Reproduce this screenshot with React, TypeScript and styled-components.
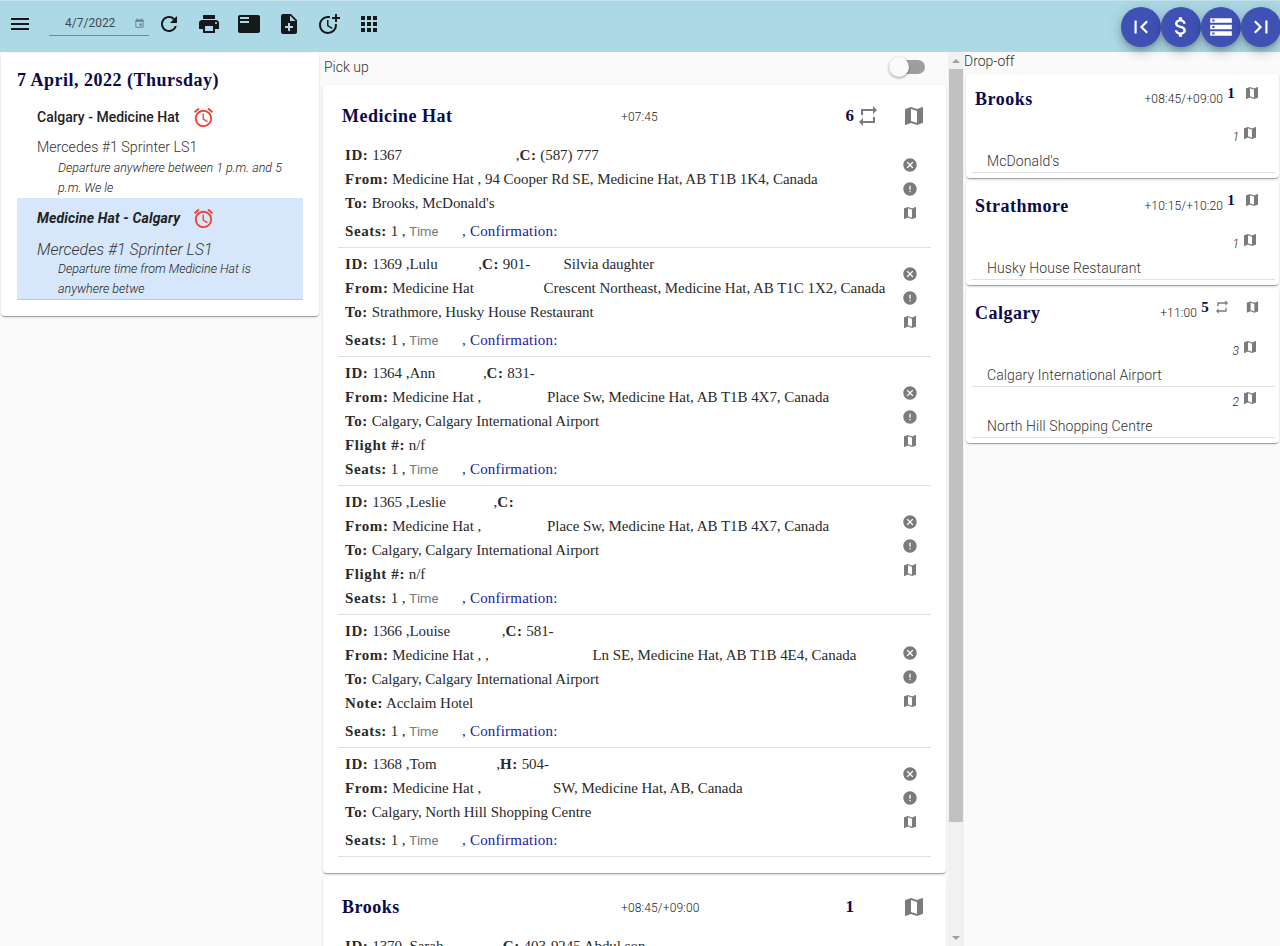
import React from 'react';
import styled, { createGlobalStyle } from 'styled-components';
import {
  MdMenu,
  MdRefresh,
  MdPrint,
  MdFeaturedPlayList,
  MdNoteAdd,
  MdMoreTime,
  MdApps,
  MdAccessAlarm,
  MdFirstPage,
  MdLastPage,
  MdAttachMoney,
  MdStorage,
  MdMap,
  MdRepeat,
  MdCancel,
  MdError,
  MdEvent,
} from 'react-icons/md';

const GlobalStyle = createGlobalStyle`
  html, body {
    margin: 0;
    padding: 0;
    height: 100%;
    overflow: hidden;
    background: #fafafa;
    font-family: Roboto, "Liberation Sans", sans-serif;
  }
  * { box-sizing: border-box; }
`;

const serif = `"Liberation Serif", "Times New Roman", serif`;

const Page = styled.div`
  height: 946px;
  display: flex;
  flex-direction: column;
  overflow: hidden;
`;

const AppBar = styled.header`
  height: 52px;
  flex: none;
  background: #add8e6;
  border-top: 1px solid #c4e3ec;
  display: flex;
  align-items: flex-start;
  position: relative;
  z-index: 2;
`;

const ToolIcons = styled.div`
  display: flex;
  align-items: center;
  height: 46px;
  flex: 1;
`;

const ToolButton = styled.span<{ $w?: number }>`
  width: ${(p) => p.$w ?? 40}px;
  height: 40px;
  display: flex;
  align-items: center;
  justify-content: center;
  color: #15191c;
  flex: none;
`;

const DateField = styled.div`
  width: 100px;
  height: 22px;
  margin: 1px 0 0 10px;
  border-bottom: 1px solid #6f8b95;
  display: flex;
  align-items: center;
  flex: none;
  font-size: 12px;
  color: #3c4a50;
  padding: 0 4px 2px 16px;
  justify-content: space-between;
  svg { color: #66808a; }
`;

const FabRow = styled.div`
  display: flex;
  padding: 6px 0 0;
  margin-right: -1px;
`;

const Fab = styled.span`
  width: 40px;
  height: 40px;
  border-radius: 50%;
  background: #3f51b5;
  color: #fff;
  display: flex;
  align-items: center;
  justify-content: center;
  box-shadow: 0 3px 5px -1px rgba(0, 0, 0, 0.2), 0 6px 10px 0 rgba(0, 0, 0, 0.14), 0 1px 18px 0 rgba(0, 0, 0, 0.12);
`;

const Columns = styled.div`
  flex: 1;
  min-height: 0;
  display: flex;
`;

const LeftColumn = styled.aside`
  width: 320px;
  flex: none;
  padding: 1px 1px 0;
`;

const Paper = styled.div`
  background: #fff;
  border-radius: 4px;
  box-shadow: 0 2px 1px -1px rgba(0, 0, 0, 0.2), 0 1px 1px 0 rgba(0, 0, 0, 0.14), 0 1px 3px 0 rgba(0, 0, 0, 0.12);
`;

const TripPaper = styled(Paper)`
  padding: 15px 16px 16px;
  height: 263px;
`;

const DayTitle = styled.h2`
  margin: 0 0 13px;
  font: bold 18px/24px ${serif};
  letter-spacing: 0.5px;
  color: #0a0a4b;
`;

const TripItem = styled.div<{ $selected?: boolean }>`
  padding: ${(p) => (p.$selected ? '8px' : '0')} 0 0 20px;
  height: ${(p) => (p.$selected ? 102 : 93)}px;
  background: ${(p) => (p.$selected ? '#d6e7fb' : 'transparent')};
  border-bottom: ${(p) => (p.$selected ? '1px solid #b8cde4' : 'none')};
  font-style: ${(p) => (p.$selected ? 'italic' : 'normal')};
`;

const TripHead = styled.div`
  display: flex;
  align-items: center;
  height: 24px;
  color: #212121;
  svg { color: #f44336; }
`;

const TripTitle = styled.span<{ $strong?: boolean }>`
  width: 155px;
  font-size: 14px;
  font-weight: ${(p) => (p.$strong ? 700 : 500)};
  letter-spacing: ${(p) => (p.$strong ? 0.15 : 0)}px;
`;

const Vehicle = styled.div<{ $large?: boolean }>`
  margin-top: ${(p) => (p.$large ? 10 : 8)}px;
  font-size: ${(p) => (p.$large ? 16 : 14.2)}px;
  line-height: ${(p) => (p.$large ? 19 : 21)}px;
  font-weight: 300;
  color: #333;
`;

const TripNote = styled.div`
  margin-left: 21px;
  font-size: 12.5px;
  line-height: 20px;
  font-weight: 300;
  font-style: italic;
  color: #222;
  max-width: 232px;
`;

const MiddleColumn = styled.main`
  width: 628px;
  flex: none;
  padding: 0 2px 0 3px;
  overflow: hidden;
`;

const SectionBar = styled.div`
  height: 33px;
  display: flex;
  align-items: center;
  justify-content: space-between;
  font-size: 14px;
  font-weight: 300;
  color: #333;
  padding: 0 21px 4px 1px;
`;

const Toggle = styled.span`
  width: 36px;
  height: 20px;
  position: relative;
  display: block;
  &::before {
    content: '';
    position: absolute;
    left: 2px;
    right: 0;
    top: 3px;
    height: 14px;
    border-radius: 7px;
    background: #9e9e9e;
  }
  &::after {
    content: '';
    position: absolute;
    left: 0;
    top: 0;
    width: 20px;
    height: 20px;
    border-radius: 50%;
    background: #fafafa;
    box-shadow: 0 1px 3px rgba(0, 0, 0, 0.4);
  }
`;

const StopCard = styled(Paper)`
  padding: 0 15px 16px;
  margin-bottom: 3px;
`;

const StopHeader = styled.div`
  height: 54px;
  display: grid;
  grid-template-columns: 279px 1fr auto;
  align-items: center;
  padding: 9px 4px 1px;
`;

const StopName = styled.h3`
  margin: 0;
  font: bold 18px/24px ${serif};
  letter-spacing: 0.5px;
  color: #0a0a4b;
`;

const StopTime = styled.span`
  font-size: 12px;
  font-weight: 300;
  letter-spacing: 0.15px;
  color: #222;
  padding-top: 2px;
`;

const StopTools = styled.div`
  display: flex;
  align-items: center;
  justify-content: flex-end;
  color: #7b7b7b;
  padding-right: 1px;
`;

const StopCount = styled.b`
  font: bold 17px/20px ${serif};
  color: #0a0a4b;
  margin-right: 2px;
`;

const ToolSlot = styled.span<{ $w: number }>`
  width: ${(p) => p.$w}px;
  display: flex;
  justify-content: flex-start;
  align-items: center;
`;

const Passenger = styled.div`
  display: flex;
  border-bottom: 1px solid #e0e0e0;
  padding: 4px 4px 4px 7px;
`;

const PassengerLines = styled.div`
  flex: 1;
  min-width: 0;
`;

const Line = styled.div<{ $gapTop?: boolean }>`
  font: 15px/24px ${serif};
  letter-spacing: -0.04px;
  color: #2a2a2a;
  white-space: nowrap;
  margin-top: ${(p) => (p.$gapTop ? 4 : 0)}px;
  b { font-weight: bold; letter-spacing: 0.6px; }
`;

const Gap = styled.span<{ $w: number }>`
  display: inline-block;
  width: ${(p) => p.$w}px;
`;

const TimeLabel = styled.span`
  font: 400 13px/1 Roboto, sans-serif;
  color: #777;
`;

const Confirmation = styled.span`
  color: #1a1aa0;
  letter-spacing: 0.2px;
`;

const PassengerIcons = styled.div`
  width: 24px;
  margin-right: 5px;
  flex: none;
  display: flex;
  flex-direction: column;
  justify-content: center;
  align-items: center;
  gap: 8px;
  color: #7b7b7b;
  padding-bottom: 8px;
`;

const Scrollbar = styled.div`
  width: 16px;
  flex: none;
  background: #f1f1f1;
  display: flex;
  flex-direction: column;
  align-items: center;
  justify-content: space-between;
  padding: 0 1px;
`;

const ScrollArrow = styled.span<{ $down?: boolean }>`
  height: 17px;
  flex: none;
  display: flex;
  align-items: center;
  &::before {
    content: '';
    border-left: 4px solid transparent;
    border-right: 4px solid transparent;
    border-${(p) => (p.$down ? 'top' : 'bottom')}: 4px solid #a0a0a0;
  }
`;

const ScrollThumb = styled.div`
  width: 100%;
  height: 753px;
  background: #c1c1c1;
  flex: none;
`;

const ScrollTrack = styled.div`
  flex: 1;
  width: 100%;
`;

const RightColumn = styled.section`
  flex: 1;
  min-width: 0;
  padding: 0 1px 0 0;
`;

const DropHeading = styled.div`
  height: 22px;
  display: flex;
  align-items: center;
  font-size: 14px;
  font-weight: 300;
  color: #333;
  padding-bottom: 4px;
`;

const DropCard = styled(Paper)`
  margin: 0 0 3px 2px;
  padding: 0 4px 5px 6px;
`;

const DropHeader = styled.div`
  height: 45px;
  display: flex;
  align-items: flex-start;
  padding: 13px 0 0 3px;
`;

const DropName = styled.h3`
  margin: 0;
  flex: 1;
  font: bold 18px/24px ${serif};
  letter-spacing: 0.5px;
  color: #0a0a4b;
`;

const DropTime = styled.span`
  font-size: 12px;
  font-weight: 300;
  letter-spacing: 0.15px;
  color: #222;
  line-height: 24px;
  margin-right: 2px;
`;

const DropCount = styled.b`
  font: bold 15px/14px ${serif};
  color: #0a0a4b;
  margin-top: -1px;
  width: 12px;
  text-align: center;
`;

const DropTool = styled.span<{ $w: number }>`
  width: ${(p) => p.$w}px;
  margin-top: -2px;
  color: #7b7b7b;
  display: flex;
  justify-content: flex-end;
  padding-right: 15px;
`;

const DropStop = styled.div`
  border-bottom: 1px solid #e0e0e0;
  padding-top: 5px;
`;

const DropStopTop = styled.div<{ $first?: boolean }>`
  height: 22px;
  margin-top: ${(p) => (p.$first ? -2 : -5)}px;
  display: flex;
  align-items: center;
  justify-content: flex-end;
  color: #7b7b7b;
  padding-right: 17px;
  gap: 3px;
`;

const DropSeats = styled.i`
  font-size: 12px;
  font-weight: 300;
  color: #222;
  padding-top: 7px;
`;

const DropPlace = styled.div`
  font-size: 14px;
  font-weight: 300;
  letter-spacing: 0.1px;
  line-height: 20px;
  color: #333;
  padding: 7px 0 1px 15px;
`;

type Rider = {
  id: React.ReactNode;
  from: React.ReactNode;
  to: string;
  extra?: { label: string; value: string; gapBelow: boolean };
};

const riders: Rider[] = [
  {
    id: <>1367 <Gap $w={110} />,<b>C:</b> (587) 777</>,
    from: <>Medicine Hat , 94 Cooper Rd SE, Medicine Hat, AB T1B 1K4, Canada</>,
    to: "Brooks, McDonald's",
  },
  {
    id: <>1369 ,Lulu <Gap $w={37} />,<b>C:</b> 901- <Gap $w={26} /> Silvia daughter</>,
    from: <>Medicine Hat <Gap $w={66} />Crescent Northeast, Medicine Hat, AB T1C 1X2, Canada</>,
    to: 'Strathmore, Husky House Restaurant',
  },
  {
    id: <>1364 ,Ann <Gap $w={44} />,<b>C:</b> 831-</>,
    from: <>Medicine Hat , <Gap $w={62} />Place Sw, Medicine Hat, AB T1B 4X7, Canada</>,
    to: 'Calgary, Calgary International Airport',
    extra: { label: 'Flight #:', value: 'n/f', gapBelow: false },
  },
  {
    id: <>1365 ,Leslie <Gap $w={44} />,<b>C:</b></>,
    from: <>Medicine Hat , <Gap $w={62} />Place Sw, Medicine Hat, AB T1B 4X7, Canada</>,
    to: 'Calgary, Calgary International Airport',
    extra: { label: 'Flight #:', value: 'n/f', gapBelow: false },
  },
  {
    id: <>1366 ,Louise <Gap $w={48} />,<b>C:</b> 581-</>,
    from: <>Medicine Hat , , <Gap $w={100} />Ln SE, Medicine Hat, AB T1B 4E4, Canada</>,
    to: 'Calgary, Calgary International Airport',
    extra: { label: 'Note:', value: 'Acclaim Hotel', gapBelow: true },
  },
  {
    id: <>1368 ,Tom <Gap $w={56} />,<b>H:</b> 504-</>,
    from: <>Medicine Hat , <Gap $w={68} />SW, Medicine Hat, AB, Canada</>,
    to: 'Calgary, North Hill Shopping Centre',
  },
];

const PassengerRow = ({ rider }: { rider: Rider }) => (
  <Passenger>
    <PassengerLines>
      <Line><b>ID:</b> {rider.id}</Line>
      <Line><b>From:</b> {rider.from}</Line>
      <Line><b>To:</b> {rider.to}</Line>
      {rider.extra && <Line><b>{rider.extra.label}</b> {rider.extra.value}</Line>}
      <Line $gapTop={!rider.extra || rider.extra.gapBelow}>
        <b>Seats:</b> 1 , <TimeLabel>Time</TimeLabel> <Gap $w={20} /><Confirmation>, Confirmation:</Confirmation>
      </Line>
    </PassengerLines>
    <PassengerIcons>
      <MdCancel size={16} />
      <MdError size={16} />
      <MdMap size={16} />
    </PassengerIcons>
  </Passenger>
);

const DropStopRow = ({ seats, place, first }: { seats: number; place: string; first?: boolean }) => (
  <DropStop>
    <DropStopTop $first={first}>
      <DropSeats>{seats}</DropSeats>
      <MdMap size={16} />
    </DropStopTop>
    <DropPlace>{place}</DropPlace>
  </DropStop>
);

const App = () => (
  <Page>
    <GlobalStyle />
    <AppBar>
      <ToolIcons>
        <ToolButton $w={39}><MdMenu size={24} /></ToolButton>
        <DateField>
          4/7/2022
          <MdEvent size={11} />
        </DateField>
        <ToolButton><MdRefresh size={24} /></ToolButton>
        <ToolButton><MdPrint size={24} /></ToolButton>
        <ToolButton><MdFeaturedPlayList size={24} /></ToolButton>
        <ToolButton><MdNoteAdd size={24} /></ToolButton>
        <ToolButton><MdMoreTime size={24} /></ToolButton>
        <ToolButton><MdApps size={24} /></ToolButton>
      </ToolIcons>
      <FabRow>
        <Fab><MdFirstPage size={26} /></Fab>
        <Fab><MdAttachMoney size={26} /></Fab>
        <Fab><MdStorage size={26} /></Fab>
        <Fab><MdLastPage size={26} /></Fab>
      </FabRow>
    </AppBar>
    <Columns>
      <LeftColumn>
        <TripPaper>
          <DayTitle>7 April, 2022 (Thursday)</DayTitle>
          <TripItem>
            <TripHead><TripTitle>Calgary - Medicine Hat</TripTitle><MdAccessAlarm size={23} /></TripHead>
            <Vehicle>Mercedes #1 Sprinter LS1</Vehicle>
            <TripNote>Departure anywhere between 1 p.m. and 5 p.m. We le</TripNote>
          </TripItem>
          <TripItem $selected>
            <TripHead><TripTitle $strong>Medicine Hat - Calgary</TripTitle><MdAccessAlarm size={23} /></TripHead>
            <Vehicle $large>Mercedes #1 Sprinter LS1</Vehicle>
            <TripNote>Departure time from Medicine Hat is anywhere betwe</TripNote>
          </TripItem>
        </TripPaper>
      </LeftColumn>
      <MiddleColumn>
        <SectionBar>
          Pick up
          <Toggle />
        </SectionBar>
        <StopCard>
          <StopHeader>
            <StopName>Medicine Hat</StopName>
            <StopTime>+07:45</StopTime>
            <StopTools>
              <StopCount>6</StopCount>
              <ToolSlot $w={46}><MdRepeat size={24} /></ToolSlot>
              <MdMap size={24} />
            </StopTools>
          </StopHeader>
          {riders.map((rider, i) => <PassengerRow key={i} rider={rider} />)}
        </StopCard>
        <StopCard>
          <StopHeader>
            <StopName>Brooks</StopName>
            <StopTime>+08:45/+09:00</StopTime>
            <StopTools>
              <StopCount>1</StopCount>
              <ToolSlot $w={46} />
              <MdMap size={24} />
            </StopTools>
          </StopHeader>
          <Passenger>
            <PassengerLines>
              <Line><b>ID:</b> 1370 ,Sarah <Gap $w={52} />,<b>C:</b> 403-9245 Abdul son</Line>
            </PassengerLines>
          </Passenger>
        </StopCard>
      </MiddleColumn>
      <Scrollbar>
        <ScrollArrow />
        <ScrollThumb />
        <ScrollTrack />
        <ScrollArrow $down />
      </Scrollbar>
      <RightColumn>
        <DropHeading>Drop-off</DropHeading>
        <DropCard>
          <DropHeader>
            <DropName>Brooks</DropName>
            <DropTime>+08:45/+09:00</DropTime>
            <DropCount>1</DropCount>
            <DropTool $w={38}><MdMap size={16} /></DropTool>
          </DropHeader>
          <DropStopRow seats={1} place="McDonald's" first />
        </DropCard>
        <DropCard>
          <DropHeader>
            <DropName>Strathmore</DropName>
            <DropTime>+10:15/+10:20</DropTime>
            <DropCount>1</DropCount>
            <DropTool $w={38}><MdMap size={16} /></DropTool>
          </DropHeader>
          <DropStopRow seats={1} place="Husky House Restaurant" first />
        </DropCard>
        <DropCard>
          <DropHeader>
            <DropName>Calgary</DropName>
            <DropTime>+11:00</DropTime>
            <DropCount>5</DropCount>
            <DropTool $w={34}><MdRepeat size={16} /></DropTool>
            <DropTool $w={30}><MdMap size={16} /></DropTool>
          </DropHeader>
          <DropStopRow seats={3} place="Calgary International Airport" first />
          <DropStopRow seats={2} place="North Hill Shopping Centre" />
        </DropCard>
      </RightColumn>
    </Columns>
  </Page>
);

export default App;
